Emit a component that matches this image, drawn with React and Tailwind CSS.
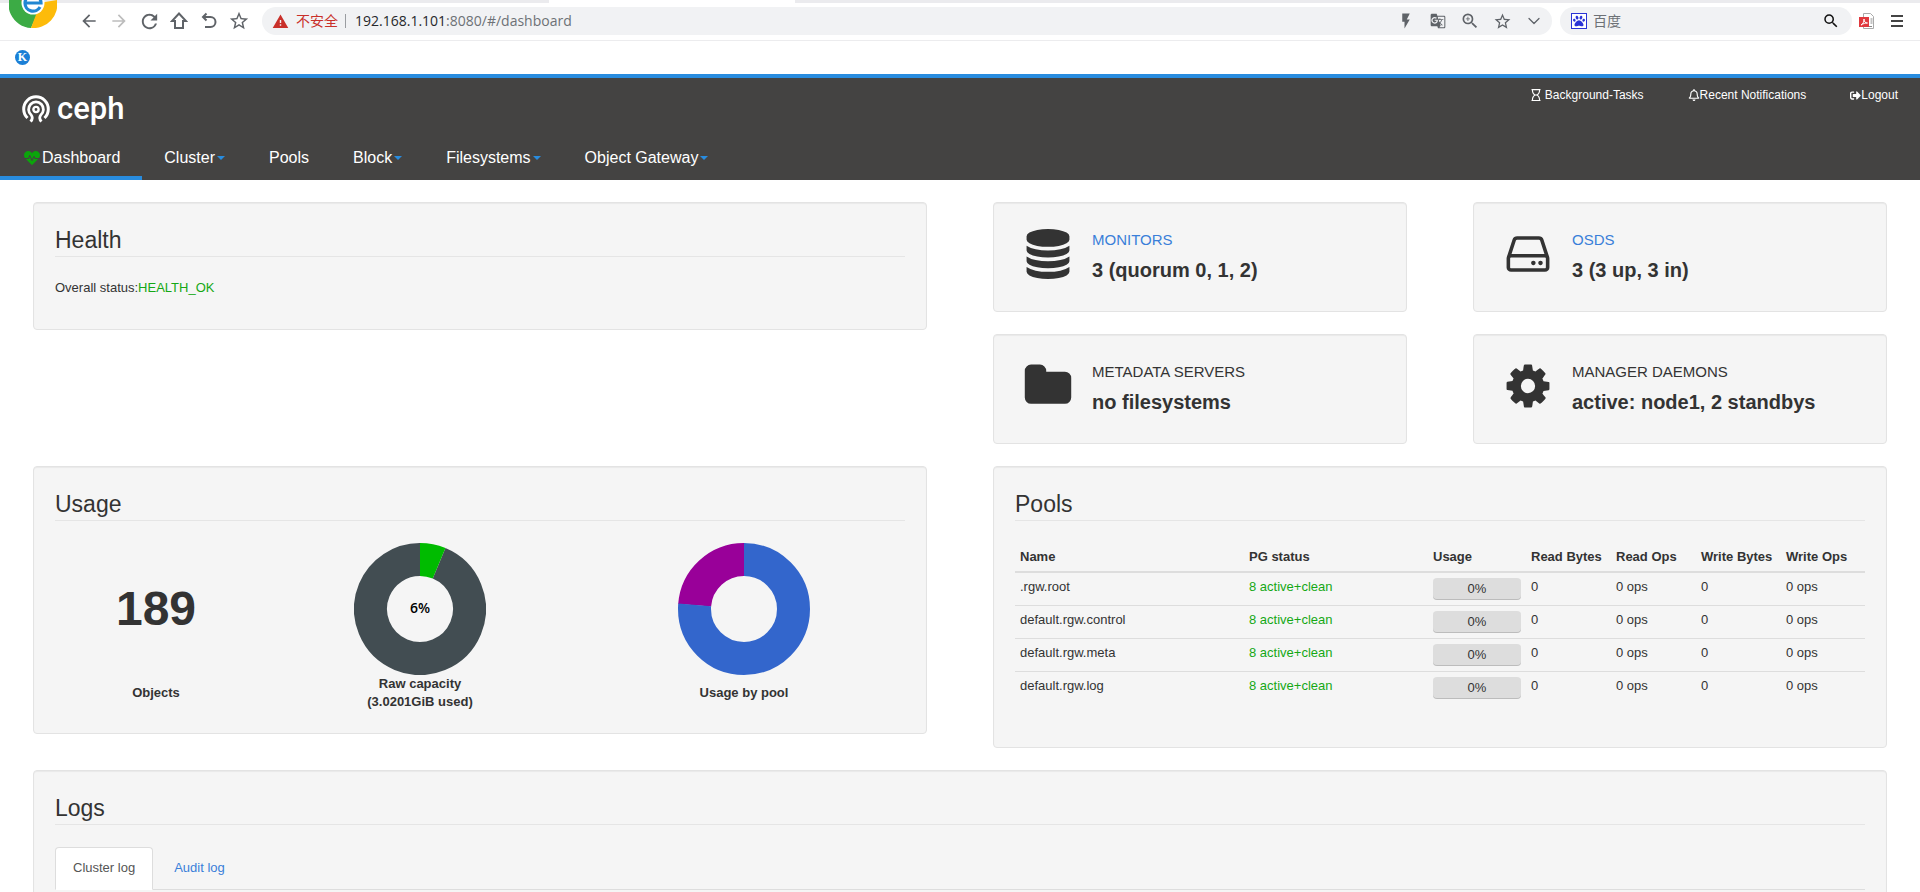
import React, { useState } from 'react';
import {
    MdArrowBack,
    MdArrowForward,
    MdRefresh,
    MdStarBorder,
    MdFlashOn,
    MdGTranslate,
    MdZoomIn,
    MdSearch,
    MdWarning,
} from 'react-icons/md';
import { FaHeartbeat, FaRegHourglass, FaRegBell, FaSignOutAlt, FaPaw } from 'react-icons/fa';
import { ChevronDown } from 'lucide-react';

const navItems = [
    { label: 'Dashboard', active: true },
    { label: 'Cluster', menu: true },
    { label: 'Pools' },
    { label: 'Block', menu: true },
    { label: 'Filesystems', menu: true },
    { label: 'Object Gateway', menu: true },
];

const pools = [
    { name: '.rgw.root', status: '8 active+clean', usage: 0 },
    { name: 'default.rgw.control', status: '8 active+clean', usage: 0 },
    { name: 'default.rgw.meta', status: '8 active+clean', usage: 0 },
    { name: 'default.rgw.log', status: '8 active+clean', usage: 0 },
];

const iconPaths = {
    database:
        'M768 768q237 0 443-43t325-127v170q0 69-103 128t-280 93.5-385 34.5-385-34.5-280-93.5-103-128v-170q119 84 325 127t443 43zM768 1536q237 0 443-43t325-127v170q0 69-103 128t-280 93.5-385 34.5-385-34.5-280-93.5-103-128v-170q119 84 325 127t443 43zM768 1152q237 0 443-43t325-127v170q0 69-103 128t-280 93.5-385 34.5-385-34.5-280-93.5-103-128v-170q119 84 325 127t443 43zM768 0q208 0 385 34.5t280 93.5 103 128v128q0 69-103 128t-280 93.5-385 34.5-385-34.5-280-93.5-103-128v-128q0-69 103-128t280-93.5 385-34.5z',
    hdd: 'M1040 1216q0 33-23.5 56.5t-56.5 23.5-56.5-23.5-23.5-56.5 23.5-56.5 56.5-23.5 56.5 23.5 23.5 56.5zm256 0q0 33-23.5 56.5t-56.5 23.5-56.5-23.5-23.5-56.5 23.5-56.5 56.5-23.5 56.5 23.5 23.5 56.5zm112 160v-320q0-13-9.5-22.5t-22.5-9.5h-1216q-13 0-22.5 9.5t-9.5 22.5v320q0 13 9.5 22.5t22.5 9.5h1216q13 0 22.5-9.5t9.5-22.5zm-1230-480h1180l-157-482q-4-13-16-21.5t-26-8.5h-782q-14 0-26 8.5t-16 21.5zm1358 160v320q0 66-47 113t-113 47h-1216q-66 0-113-47t-47-113v-320q0-25 16-75l197-606q17-53 63-86t101-33h782q55 0 101 33t63 86l197 606q16 50 16 75z',
    folder: 'M1664 608v704q0 92-66 158t-158 66h-1216q-92 0-158-66t-66-158v-960q0-92 66-158t158-66h320q92 0 158 66t66 158v32h672q92 0 158 66t66 158z',
    cog: 'M1024 896q0-106-75-181t-181-75-181 75-75 181 75 181 181 75 181-75 75-181zm512-109v222q0 12-8 23t-20 13l-185 28q-19 54-39 91 35 50 107 138 10 12 10 25t-9 23q-27 37-99 108t-94 71q-12 0-26-9l-138-108q-44 23-91 38-16 136-29 186-7 28-36 28h-222q-14 0-24.5-8.5t-11.5-21.5l-28-184q-49-16-90-37l-141 107q-10 9-25 9-14 0-25-11-126-114-165-168-7-10-7-23 0-12 8-23 15-21 51-66.5t54-70.5q-27-50-41-99l-183-27q-13-2-21-12.5t-8-23.5v-222q0-12 8-23t19-13l186-28q14-46 39-92-40-57-107-138-10-12-10-24 0-10 9-23 26-36 98.5-107.5t94.5-71.5q13 0 26 10l138 107q44-23 91-38 16-136 29-186 7-28 36-28h222q14 0 24.5 8.5t11.5 21.5l28 184q49 16 90 37l142-107q9-9 24-9 13 0 25 10 129 119 165 170 7 8 7 22 0 12-8 23-15 21-51 66.5t-54 70.5q26 50 41 98l183 28q13 2 21 12.5t8 23.5z',
};

const StatIcon = ({ name }) => (
    <svg
        viewBox={name === 'folder' ? '0 0 1664 1792' : '0 0 1536 1792'}
        className="h-[50px] w-16 shrink-0 fill-[#333]"
        aria-hidden="true"
    >
        <path d={iconPaths[name]} />
    </svg>
);

const BrowserLogo = () => (
    <svg viewBox="0 0 48 28" className="absolute left-[9px] top-0 z-10 h-7 w-12" aria-hidden="true">
        <path d="M24 4 4 -10A24 24 0 0 0 22 28L30 10z" fill="#3cab45" />
        <path d="M24 4 48 0A24 24 0 0 1 22 28L28 12z" fill="#fdbb0a" />
        <path d="M12 0 17 0 15 5z" fill="#d9513c" />
        <circle cx="24" cy="3" r="11.5" fill="#fff" />
        <path
            d="M16 3H32A8 8 0 0 0 16 3A8 8 0 0 0 31 7"
            fill="none"
            stroke="#2187d2"
            strokeWidth="3.200"
        />
    </svg>
);

const CephLogo = () => (
    <svg viewBox="0 0 28 28" className="size-7" fill="none" stroke="#fff" aria-hidden="true">
        <path d="M5.500 23A12.300 12.300 0 1 1 22.500 23" strokeWidth="3" />
        <path
            d="M8.500 26.500C10.500 24.500 10.800 22 9.200 20A7.400 7.400 0 1 1 18.800 20C17.200 22 17.500 24.500 19.500 26.500"
            strokeWidth="2.800"
        />
        <circle cx="14" cy="14.500" r="2.600" strokeWidth="2.400" />
    </svg>
);

const ToolButton = ({ label, className = 'w-[30px]', children }) => (
    <button type="button" aria-label={label} className={`flex h-7 shrink-0 items-center justify-center text-[#5f6368] ${className}`}>
        {children}
    </button>
);

const BrowserBar = () => (
    <div className="relative bg-white">
        <BrowserLogo />
        <div className="flex h-[3px] bg-[#ebebee]">
            <div className="ml-[549px] w-[246px] bg-white" />
        </div>
        <div className="flex h-[38px] items-center border-b border-[#ececee] pb-px pl-[74px] pr-2">
            <ToolButton label="Back"><MdArrowBack size={20} /></ToolButton>
            <ToolButton label="Forward"><MdArrowForward size={20} className="text-[#bdbdbd]" /></ToolButton>
            <ToolButton label="Reload"><MdRefresh size={23} /></ToolButton>
            <ToolButton label="Home">
                <svg viewBox="0 0 18 18" className="size-[18px]" fill="none" stroke="currentColor" strokeWidth="2">
                    <path d="M5 9H2L9 1.500 16 9h-3v7H5z" />
                </svg>
            </ToolButton>
            <ToolButton label="Undo">
                <svg viewBox="0 0 18 18" className="size-[18px]" fill="none" stroke="currentColor" strokeWidth="2">
                    <path d="M6.500 1.500 3 5l3.500 3.500M3 5h7.500a5 5 0 0 1 0 10H5" />
                </svg>
            </ToolButton>
            <ToolButton label="Favourite"><MdStarBorder size={22} /></ToolButton>
            <div className="ml-2 flex h-7 min-w-0 flex-1 items-center rounded-full bg-[#f1f2f4] pl-[10px] pr-[2px] font-['Open_Sans','Noto_Sans_CJK_SC',sans-serif] text-sm">
                <MdWarning size={17} className="shrink-0 text-[#c9302a]" />
                <span className="ml-[7px] text-[#c9302a]">不安全</span>
                <span className="ml-[7px] h-[14px] w-px bg-[#9a9da1]" />
                <div role="textbox" aria-label="Address" className="ml-[9px] flex-1 truncate text-[#6d7176]">
                    <span className="text-[#26282b]">192.168.1.101</span>:8080/#/dashboard
                </div>
                <ToolButton label="Speed" className="w-8"><MdFlashOn size={18} /></ToolButton>
                <ToolButton label="Translate" className="w-8"><MdGTranslate size={16} /></ToolButton>
                <ToolButton label="Zoom" className="w-8"><MdZoomIn size={20} /></ToolButton>
                <ToolButton label="Bookmark" className="w-8"><MdStarBorder size={19} /></ToolButton>
                <ToolButton label="More" className="w-8"><ChevronDown size={20} strokeWidth={1.5} /></ToolButton>
            </div>
            <div className="ml-2 flex h-7 w-[292px] items-center rounded-full bg-[#f1f2f4] pl-[11px] pr-[6px]">
                <span className="flex size-4 items-center justify-center border border-[#2a33d6] bg-white text-[#2a33d6]">
                    <FaPaw size={12} />
                </span>
                <input
                    type="text"
                    aria-label="Search"
                    placeholder="百度"
                    className="ml-[6px] min-w-0 flex-1 bg-transparent font-['Open_Sans','Noto_Sans_CJK_SC',sans-serif] text-sm outline-none placeholder:text-[#6d7176]"
                />
                <ToolButton label="Search"><MdSearch size={18} className="text-[#111]" /></ToolButton>
            </div>
            <ToolButton label="PDF tools">
                <svg viewBox="0 0 16 16" className="size-4" aria-hidden="true">
                    <path d="M4.500.500h7l3 3v12h-10z" fill="#fff" stroke="#aaa" />
                    <path d="M11.500 6h2M11.500 8h2M11.500 10h2M6 13.500h7" stroke="#888" />
                    <path d="M0 4h10v10H0z" fill="#e0393e" />
                    <path d="M2 12c2-1 3-3 3-6 0 3 1.500 4 3.500 4-2.500 0-4 .500-6.500 2z" fill="none" stroke="#fff" />
                </svg>
            </ToolButton>
            <ToolButton label="Menu">
                <svg viewBox="0 0 14 14" className="size-[14px]" stroke="#444" strokeWidth="2" aria-hidden="true">
                    <path d="M1 2h12M1 7h12M1 12h12" />
                </svg>
            </ToolButton>
        </div>
        <div className="flex h-[33px] items-center pb-px pl-[15px]">
            <a
                href="#k"
                className="flex size-[15px] items-center justify-center rounded-full bg-[#1b7fd6] font-['Liberation_Serif',serif] text-xs font-bold text-white"
            >
                K
            </a>
        </div>
    </div>
);

const Navbar = () => (
    <header className="border-t-4 border-[#288cdf] bg-[#444342] text-white">
        <div className="flex h-[58px] justify-between">
            <a href="#/" aria-label="ceph" className="ml-[22px] mt-[17px] flex h-7 items-center gap-[7px]">
                <CephLogo />
                <span className="font-[Roboto,sans-serif] text-[31px] font-medium leading-7">ceph</span>
            </a>
            <div className="mt-2 flex text-xs leading-[18px]">
                <a href="#/tasks" className="flex h-[18px] items-center gap-[3px] px-[22px]">
                    <FaRegHourglass size={12} /> Background-Tasks
                </a>
                <a href="#/notifications" className="flex h-[18px] items-center px-[22px]">
                    <FaRegBell size={12} />Recent Notifications
                </a>
                <a href="#/logout" className="flex h-[18px] items-center px-[22px]">
                    <FaSignOutAlt size={11} />Logout
                </a>
            </div>
        </div>
        <nav className="flex text-base">
            {navItems.map((item) => (
                <a
                    key={item.label}
                    href="#/dashboard"
                    className={`flex h-11 items-center border-b-4 px-[22px] pt-[3px] ${item.active ? 'border-[#288cdf]' : 'border-transparent'}`}
                >
                    {item.active && <FaHeartbeat size={16} className="mx-[2px] text-[#0ba50b]" />}
                    {item.label}
                    {item.menu && (
                        <span className="ml-[2px] border-x-4 border-t-4 border-x-transparent border-t-[#288cdf]" />
                    )}
                </a>
            ))}
        </nav>
    </header>
);

const Panel = ({ className = 'px-[21px] py-[22px]', children }) => (
    <section className={`rounded border border-[#e3e3e3] bg-[#f5f5f5] shadow-[inset_0_1px_1px_rgba(0,0,0,0.05)] ${className}`}>
        {children}
    </section>
);

const Legend = ({ children }) => (
    <h2 className="mb-[22px] border-b border-[#e5e5e5] text-[23px] leading-[31px]">{children}</h2>
);

const Stat = ({ icon, title, link, value }) => (
    <Panel className="flex items-start gap-3 px-[22px] py-[26px]">
        <StatIcon name={icon} />
        <div>
            <h3 className="text-[15px] uppercase leading-[22px]">
                {link ? <a href="#/cluster" className="text-[#3a7fd9]">{title}</a> : title}
            </h3>
            <p className="mt-1 text-xl font-bold leading-[30px]">{value}</p>
        </div>
    </Panel>
);

const ringLength = 2 * Math.PI * 49.5;

// the ring is stroked on its middle radius, so the band runs from 33 to 66
const Arc = ({ from, to, color }) => (
    <circle
        cx="66"
        cy="66"
        r="49.5"
        stroke={color}
        strokeDasharray={`${ringLength * (to - from)} ${ringLength}`}
        transform={`rotate(${from * 360 - 90} 66 66)`}
    />
);

const Donut = ({ value, color, rest, label }) => (
    <svg viewBox="0 0 132 132" className="size-[132px]" fill="none" strokeWidth="33">
        <Arc from={value} to={1} color={rest} />
        <Arc from={0} to={value} color={color} />
        {label && (
            <text
                x="66"
                y="70"
                textAnchor="middle"
                fill="#000"
                stroke="none"
                className="font-['Open_Sans',sans-serif] text-sm font-semibold"
            >
                {label}
            </text>
        )}
    </svg>
);

const UsageItem = ({ caption, children }) => (
    <div className="flex flex-col items-center">
        <div className="flex h-[132px] items-center">{children}</div>
        <div className="flex h-9 items-center text-center font-bold">{caption}</div>
    </div>
);

const PoolsTable = () => (
    <table className="w-full table-fixed border-separate border-spacing-0 text-left">
        <colgroup>
            <col />
            <col className="w-[184px]" />
            <col className="w-[98px]" />
            <col className="w-[85px]" />
            <col className="w-[85px]" />
            <col className="w-[85px]" />
            <col className="w-[84px]" />
        </colgroup>
        <thead>
            <tr>
                {['Name', 'PG status', 'Usage', 'Read Bytes', 'Read Ops', 'Write Bytes', 'Write Ops'].map((title) => (
                    <th key={title} className="border-b-2 border-[#ddd] p-[5px] font-bold whitespace-nowrap">{title}</th>
                ))}
            </tr>
        </thead>
        <tbody>
            {pools.map((pool) => (
                <tr key={pool.name} className="align-top *:border-b *:border-[#ddd] *:p-[5px] last:*:border-b-0">
                    <td>{pool.name}</td>
                    <td className="text-[#15a815]">{pool.status}</td>
                    <td>
                        <div className="h-[22px] rounded bg-[#ddd] text-center leading-[22px] shadow-[inset_0_-1px_0_rgba(0,0,0,0.15)]">
                            {pool.usage}%
                        </div>
                    </td>
                    <td>0</td>
                    <td>0 ops</td>
                    <td>0</td>
                    <td>0 ops</td>
                </tr>
            ))}
        </tbody>
    </table>
);

const Logs = () => {
    const [tab, setTab] = useState('Cluster log');

    return (
        <Panel>
            <Legend>Logs</Legend>
            <div role="tablist" className="flex gap-[3px] border-b border-[#ddd]">
                {['Cluster log', 'Audit log'].map((name) => (
                    <button
                        key={name}
                        type="button"
                        role="tab"
                        aria-selected={tab === name}
                        onClick={() => setTab(name)}
                        className={`-mb-px rounded-t border px-[17px] pb-3 pt-[11px] ${
                            tab === name
                                ? 'border-[#ddd] border-b-white bg-white text-[#555]'
                                : 'border-transparent text-[#3a7fd9]'
                        }`}
                    >
                        {name}
                    </button>
                ))}
            </div>
            <div role="tabpanel" className="min-h-48" />
        </Panel>
    );
};

const App = () => (
    <div className="h-screen overflow-hidden bg-white font-['Liberation_Sans',Arial,sans-serif] text-[13px] leading-[18px] text-[#333]">
        <BrowserBar />
        <Navbar />
        <main className="flex flex-col gap-[22px] px-[33px] pt-[22px]">
            <div className="grid grid-cols-2 items-start gap-x-[66px]">
                <Panel>
                    <Legend>Health</Legend>
                    <p className="mb-[10px]">
                        Overall status:<span className="text-[#15a815]">HEALTH_OK</span>
                    </p>
                </Panel>
                <div className="grid grid-cols-2 gap-x-[66px] gap-y-[22px]">
                    <Stat icon="database" title="Monitors" link value="3 (quorum 0, 1, 2)" />
                    <Stat icon="hdd" title="OSDs" link value="3 (3 up, 3 in)" />
                    <Stat icon="folder" title="Metadata servers" value="no filesystems" />
                    <Stat icon="cog" title="Manager daemons" value="active: node1, 2 standbys" />
                </div>
            </div>

            <div className="grid grid-cols-2 items-start gap-x-[66px]">
                <Panel>
                    <Legend>Usage</Legend>
                    <div className="grid grid-cols-[202fr_326fr_322fr]">
                        <UsageItem caption="Objects">
                            <span className="text-5xl font-bold leading-none">189</span>
                        </UsageItem>
                        <UsageItem caption={<>Raw capacity<br />(3.0201GiB used)</>}>
                            <Donut value={0.063} color="#00bb00" rest="#424d52" label="6%" />
                        </UsageItem>
                        <UsageItem caption="Usage by pool">
                            <Donut value={0.762} color="#3366cc" rest="#990099" />
                        </UsageItem>
                    </div>
                </Panel>
                <Panel className="px-[21px] pb-[43px] pt-[22px]">
                    <Legend>Pools</Legend>
                    <PoolsTable />
                </Panel>
            </div>

            <Logs />
        </main>
    </div>
);

export default App;
